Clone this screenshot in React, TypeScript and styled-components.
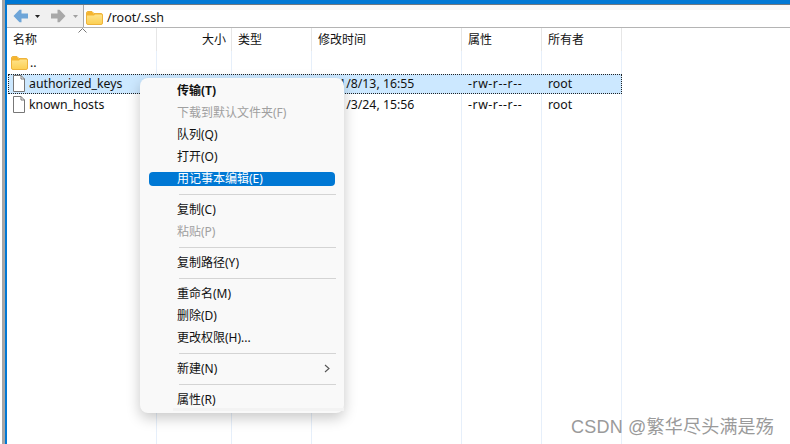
import styled, { createGlobalStyle } from 'styled-components';

const GlobalStyle = createGlobalStyle`
    html, body {
        margin: 0;
        padding: 0;
        background: #fff;
    }
    #root {
        width: 790px;
        height: 444px;
    }
`;

const columns = '150px 75px 80px 150px 80px 80px 1fr';
const fontStack = '"Noto Sans", "Noto Sans CJK SC", sans-serif';

const Window = styled.div`
    position: relative;
    width: 790px;
    height: 444px;
    overflow: hidden;
    display: flex;
    background: #fff;
    font-family: ${fontStack};
    font-size: 12.3px;
    color: #111;
`;

const LeftEdge = styled.div`
    width: 7px;
    flex: none;
    background: linear-gradient(to right, #fff 2px, #a6a6a6 2px, #a6a6a6 5px, #0078d4 5px);
`;

const Main = styled.div`
    flex: 1;
    display: flex;
    flex-direction: column;
    min-width: 0;
`;

const TitleEdge = styled.div`
    height: 4px;
    background: #0078d4;
    border-bottom: 1px solid #6d7780;
    flex: none;
`;

const Toolbar = styled.div`
    height: 22px;
    flex: none;
    display: flex;
    border-bottom: 1px solid #b4b4b4;
`;

const NavButtons = styled.div`
    width: 77px;
    flex: none;
    display: flex;
    align-items: center;
    padding-left: 6px;
    box-sizing: border-box;
    background: #f0f0f0;
    border-right: 1px solid #a8a8a8;
    svg {
        flex: none;
    }
`;

const AddressBar = styled.div`
    flex: 1;
    display: flex;
    align-items: center;
    gap: 4px;
    padding: 3px 0 0 2px;
    background: linear-gradient(to bottom, #f7f7f7 5px, #fff 5px);
    font-size: 12.5px;
`;

const Caret = styled.svg`
    margin-left: 7px;
    margin-right: 11px;
    &:last-child {
        margin-right: 0;
    }
`;

const SortMark = styled.svg`
    position: absolute;
    left: 78px;
    top: 28px;
`;

const FileList = styled.div`
    flex: 1;
    display: flex;
    flex-direction: column;
    min-height: 0;
`;

const HeaderRow = styled.div`
    display: grid;
    grid-template-columns: ${columns};
    height: 23px;
    flex: none;
`;

const HeaderCell = styled.div<{ $right?: boolean }>`
    display: flex;
    align-items: center;
    justify-content: ${p => (p.$right ? 'flex-end' : 'flex-start')};
    padding: 0 ${p => (p.$right ? '5px' : '6px')} 2px 6px;
    border-right: 1px solid #e6e6e6;
    font-size: 12px;
    &:last-child {
        border-right: none;
    }
`;

const Row = styled.div<{ $selected?: boolean; $height: number }>`
    position: relative;
    isolation: isolate;
    display: grid;
    grid-template-columns: ${columns};
    height: ${p => p.$height}px;
    flex: none;
    &::before {
        content: '';
        display: ${p => (p.$selected ? 'block' : 'none')};
        position: absolute;
        z-index: -1;
        left: 1px;
        top: 0;
        width: 612px;
        height: 18px;
        background: #cce8ff;
        border: 1px dotted #222;
    }
`;

const Cell = styled.div<{ $selected?: boolean; $wide?: boolean }>`
    display: flex;
    align-items: center;
    gap: 4px;
    padding-left: 6px;
    padding-bottom: ${p => (p.$selected ? '1px' : '0')};
    border-right: 1px solid ${p => (p.$selected ? 'transparent' : '#e6effa')};
    white-space: nowrap;
    overflow: hidden;
    letter-spacing: ${p => (p.$wide ? '0.55px' : '0')};
    &:last-child {
        border-right: none;
    }
`;

const ParentCell = styled(Cell)`
    padding-left: 4px;
    gap: 2px;
`;

const FillerRow = styled.div`
    flex: 1;
    display: grid;
    grid-template-columns: ${columns};
`;

const FillerCell = styled.div`
    border-right: 1px solid #e6effa;
    &:last-child {
        border-right: none;
    }
`;

const Menu = styled.div`
    position: absolute;
    left: 140px;
    top: 78px;
    width: 204px;
    height: 335px;
    box-sizing: border-box;
    padding-top: 1px;
    background: #f9f9f9;
    border-radius: 8px;
    box-shadow: 0 5px 14px rgba(0, 0, 0, 0.22);
    font-size: 12px;
    &::after {
        content: '';
        position: absolute;
        left: 33px;
        right: 0;
        bottom: 2px;
        height: 3px;
        background: #f3f3f3;
    }
`;

const MenuItem = styled.div<{ $disabled?: boolean; $bold?: boolean; $active?: boolean }>`
    position: relative;
    height: 22px;
    display: flex;
    align-items: center;
    justify-content: space-between;
    padding: 0 14px 0 37px;
    color: ${p => (p.$active ? '#fff' : p.$disabled ? '#a0a0a0' : '#111')};
    font-weight: ${p => (p.$bold ? 700 : 400)};
    z-index: 0;
    &::before {
        content: '';
        display: ${p => (p.$active ? 'block' : 'none')};
        position: absolute;
        left: 9px;
        right: 9px;
        top: 5px;
        height: 14px;
        border-radius: 4px;
        background: #0078d4;
        z-index: -1;
    }
`;

const MenuSeparator = styled.div`
    height: 9px;
    box-sizing: border-box;
    display: flex;
    align-items: center;
    padding: 1px 8px 0 39px;
    &::after {
        content: '';
        flex: 1;
        height: 1px;
        background: #d4d4d4;
    }
`;

const Watermark = styled.div`
    position: absolute;
    right: 16px;
    top: 417px;
    font-size: 18px;
    line-height: 21px;
    letter-spacing: 0.2px;
    color: #9a9a9a;
    font-family: "Liberation Sans", "Noto Sans CJK SC", sans-serif;
    white-space: nowrap;
`;

function FolderIcon({ id }: { id: string }) {
    return (
        <svg width="17" height="14" viewBox="0 0 17 14">
            <defs>
                <linearGradient id={id} x1="0" y1="0" x2="0" y2="1">
                    <stop offset="0" stopColor="#ffe99a" />
                    <stop offset="1" stopColor="#fccf52" />
                </linearGradient>
            </defs>
            <path d="M0.5 2 Q0.5 0.5 2 0.5 H6 L8 2.5 H15 Q16.5 2.5 16.5 4 V12 Q16.5 13.5 15 13.5 H2 Q0.5 13.5 0.5 12 Z" fill={`url(#${id})`} stroke="#eeb33b" />
            <path d="M1 4.5 V2 Q1 1 2 1 H6 L8 3 H16 V3.5 H9 L8 4.5 Z" fill="#f5b52f" />
        </svg>
    );
}

function FileIcon() {
    return (
        <svg width="12" height="17" viewBox="0 0 12 17">
            <path d="M0.5 0.5 H8 L11.5 4 V16.5 H0.5 Z" fill="#fff" stroke="#777" />
            <path d="M8 0.5 V4 H11.5" fill="none" stroke="#777" />
        </svg>
    );
}

function ArrowIcon({ color, flip }: { color: string; flip?: boolean }) {
    return (
        <svg width="15" height="14" viewBox="0 0 15 14" style={flip ? { transform: 'scaleX(-1)' } : undefined}>
            <path d="M0.5 7 L6.5 0.8 H8.5 V4.5 H15 V9.5 H8.5 V13.2 H6.5 Z" fill={color} />
        </svg>
    );
}

function CaretIcon({ color }: { color: string }) {
    return (
        <Caret width="5" height="3" viewBox="0 0 5 3">
            <path d="M0 0 H5 L2.5 3 Z" fill={color} />
        </Caret>
    );
}

const rows = [
    { name: 'authorized_keys', time: '2021/8/13, 16:55', selected: true, height: 20 },
    { name: 'known_hosts', time: '2021/3/24, 15:56', selected: false, height: 21 },
];

function App() {
    return (
        <>
            <GlobalStyle />
            <Window>
                <LeftEdge />
                <Main>
                    <TitleEdge />
                    <Toolbar>
                        <NavButtons>
                            <ArrowIcon color="#6ea5d8" />
                            <CaretIcon color="#222" />
                            <ArrowIcon color="#a8a8a8" flip />
                            <CaretIcon color="#a0a0a0" />
                        </NavButtons>
                        <AddressBar>
                            <FolderIcon id="folder-address" />
                            /root/.ssh
                        </AddressBar>
                    </Toolbar>
                    <FileList>
                        <HeaderRow>
                            <HeaderCell>名称</HeaderCell>
                            <HeaderCell $right>大小</HeaderCell>
                            <HeaderCell>类型</HeaderCell>
                            <HeaderCell>修改时间</HeaderCell>
                            <HeaderCell>属性</HeaderCell>
                            <HeaderCell>所有者</HeaderCell>
                            <HeaderCell />
                        </HeaderRow>
                        <Row $height={23}>
                            <ParentCell>
                                <FolderIcon id="folder-parent" />
                                ..
                            </ParentCell>
                            <Cell />
                            <Cell />
                            <Cell />
                            <Cell />
                            <Cell />
                            <Cell />
                        </Row>
                        {rows.map(r => (
                            <Row key={r.name} $selected={r.selected} $height={r.height}>
                                <Cell $selected={r.selected}>
                                    <FileIcon />
                                    {r.name}
                                </Cell>
                                <Cell $selected={r.selected} />
                                <Cell $selected={r.selected} />
                                <Cell $selected={r.selected}>{r.time}</Cell>
                                <Cell $selected={r.selected} $wide>-rw-r--r--</Cell>
                                <Cell $selected={r.selected}>root</Cell>
                                <Cell />
                            </Row>
                        ))}
                        <FillerRow>
                            <FillerCell />
                            <FillerCell />
                            <FillerCell />
                            <FillerCell />
                            <FillerCell />
                            <FillerCell />
                            <FillerCell />
                        </FillerRow>
                    </FileList>
                </Main>
                <SortMark width="9" height="5" viewBox="0 0 9 5">
                    <path d="M0.5 4.5 L4.5 0.5 L8.5 4.5" fill="none" stroke="#777" />
                </SortMark>
                <Menu>
                    <MenuItem $bold>传输(T)</MenuItem>
                    <MenuItem $disabled>下载到默认文件夹(F)</MenuItem>
                    <MenuItem>队列(Q)</MenuItem>
                    <MenuItem>打开(O)</MenuItem>
                    <MenuItem $active>用记事本编辑(E)</MenuItem>
                    <MenuSeparator />
                    <MenuItem>复制(C)</MenuItem>
                    <MenuItem $disabled>粘贴(P)</MenuItem>
                    <MenuSeparator />
                    <MenuItem>复制路径(Y)</MenuItem>
                    <MenuSeparator />
                    <MenuItem>重命名(M)</MenuItem>
                    <MenuItem>删除(D)</MenuItem>
                    <MenuItem>更改权限(H)...</MenuItem>
                    <MenuSeparator />
                    <MenuItem>
                        新建(N)
                        <svg width="6" height="9" viewBox="0 0 6 9">
                            <path d="M1 1 L5 4.5 L1 8" fill="none" stroke="#555" strokeWidth="1.1" />
                        </svg>
                    </MenuItem>
                    <MenuSeparator />
                    <MenuItem>属性(R)</MenuItem>
                </Menu>
                <Watermark>CSDN @繁华尽头满是殇</Watermark>
            </Window>
        </>
    );
}

export default App;
